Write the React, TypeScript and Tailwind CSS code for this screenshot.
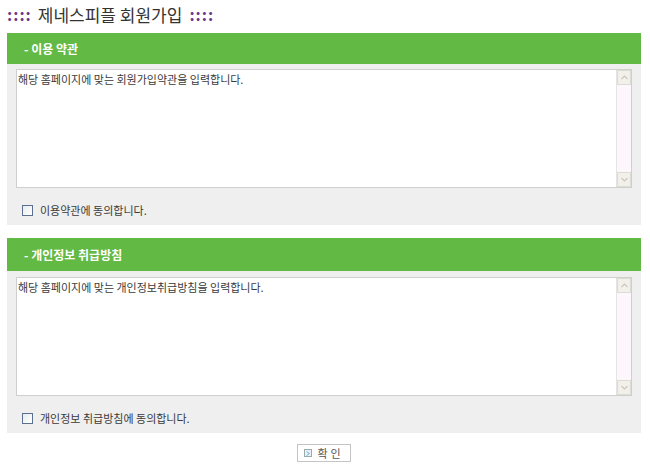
import React from "react";

const font = { fontFamily: '"Noto Sans CJK KR", "Noto Sans", sans-serif' };

function FakeScroll() {
  return (
    <div className="flex w-[15px] flex-col border-l border-[#e4e4e4] bg-[#fdf6fc]">
      <div className="flex h-[15px] items-center justify-center border border-[#dcdcd4] bg-[#f1f1ea]">
        <svg width="7" height="5" viewBox="0 0 7 5"><path d="M0.5 4 L3.5 1 L6.5 4" fill="none" stroke="#c8c8c0" strokeWidth="1.2" /></svg>
      </div>
      <div className="flex-1" />
      <div className="flex h-[15px] items-center justify-center border border-[#dcdcd4] bg-[#f1f1ea]">
        <svg width="7" height="5" viewBox="0 0 7 5"><path d="M0.5 1 L3.5 4 L6.5 1" fill="none" stroke="#c8c8c0" strokeWidth="1.2" /></svg>
      </div>
    </div>
  );
}

function Section({ title, body, agree, tall }: { title: string; body: string; agree: string; tall?: boolean }) {
  return (
    <div className="mx-[7px] w-[634px]">
      <div className={`flex items-center bg-[#62b943] pl-[17px] text-[12px] font-bold text-white ${tall ? "h-[33px]" : "h-[31px]"}`}>
        {title}
      </div>
      <div className={`bg-[#efefef] px-[9px] pb-[8px] ${tall ? "pt-[6px]" : "pt-[5px]"}`}>
        <div className="flex h-[119px] w-[616px] border border-[#cfcfcf] bg-white">
          <div className="flex-1 pl-[1px] pt-[1px] text-[11px] leading-[16px] text-[#3a3a3a]">{body}</div>
          <FakeScroll />
        </div>
        <div className="mt-[15px] flex h-[14px] items-center pl-[6px]">
          <div className="h-[11px] w-[11px] border border-[#5b6f8f] bg-gradient-to-br from-[#e8eaee] to-white" />
          <span className="ml-[7px] text-[11px] text-[#3a3a3a]">{agree}</span>
        </div>
      </div>
    </div>
  );
}

export default function App() {
  return (
    <div className="h-[472px] w-[650px] bg-white" style={font}>
      <div className="flex h-[33px] items-start pl-[7px] pt-[2px]">
        <span className="text-[16px] font-bold tracking-[1px] text-[#6b3a86]">::::</span>
        <span className="ml-[6px] text-[17px] text-[#333]">제네스피플 회원가입</span>
        <span className="ml-[7px] text-[16px] font-bold tracking-[1px] text-[#6b3a86]">::::</span>
      </div>
      <Section title="- 이용 약관" body="해당 홈페이지에 맞는 회원가입약관을 입력합니다." agree="이용약관에 동의합니다." />
      <div className="h-[13px]" />
      <Section tall title="- 개인정보 취급방침" body="해당 홈페이지에 맞는 개인정보취급방침을 입력합니다." agree="개인정보 취급방침에 동의합니다." />
      <div className="mt-[11px] flex justify-center">
        <div className="ml-[-2px] flex h-[18px] w-[54px] items-center justify-center gap-[5px] border border-[#c4c4c4] bg-white text-[11px] text-[#555]">
          <div className="flex h-[8px] w-[8px] items-center justify-center border border-[#9aa] bg-[#eef]">
            <svg width="4" height="5" viewBox="0 0 4 5"><path d="M1 0.5 L3 2.5 L1 4.5" fill="none" stroke="#3a9" strokeWidth="1" /></svg>
          </div>
          <span className="tracking-[3px]">확인</span>
        </div>
      </div>
    </div>
  );
}
